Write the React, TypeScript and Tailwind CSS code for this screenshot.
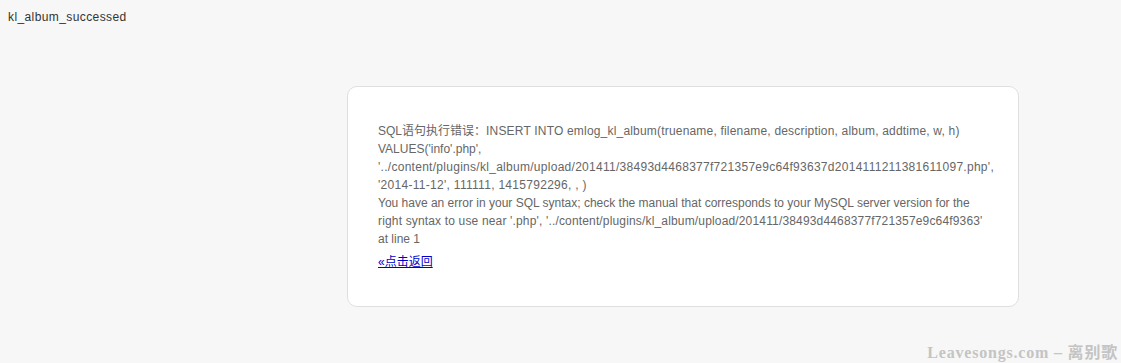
export default function App() {
  return (
    <div
      className="relative min-h-screen bg-[#f7f7f7] p-2 text-[12px] leading-[18px] text-[#333]"
      style={{ fontFamily: '"Liberation Sans", Arial, "Noto Sans CJK SC", sans-serif' }}
    >
      <div className="tracking-[0.4px]">kl_album_successed</div>

      {/* message box */}
      <div className="ml-[339px] mt-[60px] w-[672px] rounded-[10px] border border-[#dfdfdf] bg-white px-[10px] py-[30px] text-[#666]">
        <p className="mx-5 my-[5px] whitespace-nowrap leading-[18px]">
          SQL语句执行错误：
          <span className="tracking-[0.19px]">
            INSERT INTO emlog_kl_album(truename, filename, description, album, addtime, w, h)
          </span>
          <br />
          VALUES('info'.php',
          <br />
          <span className="tracking-[0.28px]">
            '../content/plugins/kl_album/upload/201411/38493d4468377f721357e9c64f93637d2014111211381611097.php',
          </span>
          <br />
          <span className="tracking-[0.29px]">'2014-11-12', 111111, 1415792296, , )</span>
          <br />
          You have an error in your SQL syntax; check the manual that corresponds to your MySQL server version for the
          <br />
          <span className="tracking-[0.16px]">
            right syntax to use near '.php', '../content/plugins/kl_album/upload/201411/38493d4468377f721357e9c64f9363'
          </span>
          <br />
          at line 1
        </p>
        <p className="mx-5 my-[5px] leading-[18px]">
          <a href="#" className="text-[#0000cc] underline">
            «点击返回
          </a>
        </p>
      </div>

      {/* watermark */}
      <div
        className="absolute bottom-[1px] right-[3px] text-[16px] font-bold tracking-[0.8px] text-[#c4c4c4]"
        style={{ fontFamily: '"Liberation Serif", "Noto Sans CJK SC", serif' }}
      >
        Leavesongs.com – 离别歌
      </div>
    </div>
  );
}
